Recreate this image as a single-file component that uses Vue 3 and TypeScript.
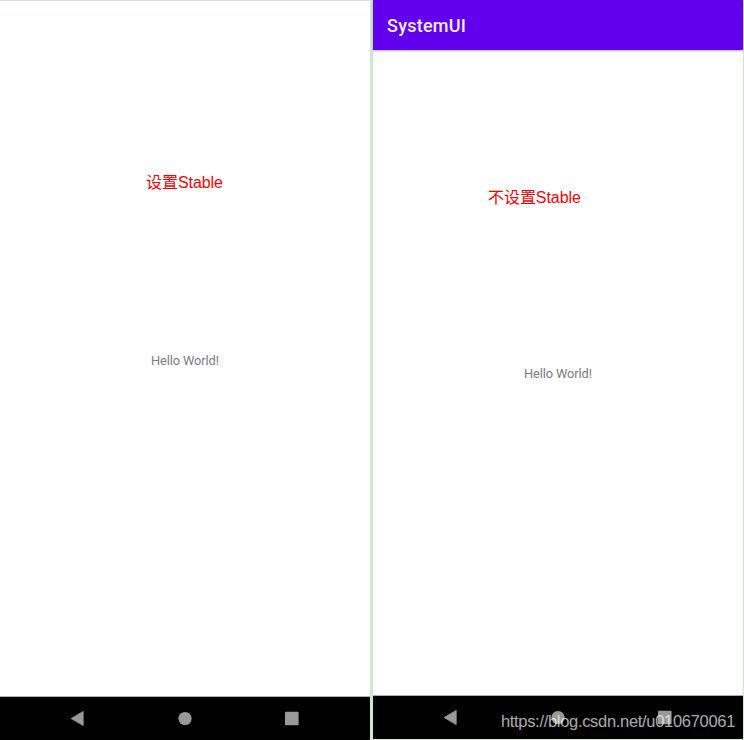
<script setup lang="ts">
interface Phone {
  id: string
  title?: string
  note: string
}

const phones: Phone[] = [
  { id: 'stable', note: '设置Stable' },
  { id: 'unstable', title: 'SystemUI', note: '不设置Stable' },
]
const source = 'https://blog.csdn.net/u010670061'
</script>

<template>
  <main class="comparison">
    <section v-for="phone in phones" :key="phone.id" class="phone" :class="phone.id">
      <header v-if="phone.title" class="app-bar">{{ phone.title }}</header>
      <div class="content">
        <p class="note">{{ phone.note }}</p>
        <p class="hello">Hello World!</p>
      </div>
      <nav class="nav-bar">
        <svg class="keys" width="370" height="43" viewBox="0 0 370 43" fill="#999">
          <path d="M71.2 21.5 83.2 14.4V28.6Z" stroke="#999" stroke-width=".8" stroke-linejoin="round" />
          <circle cx="185" cy="21.5" r="6.6" />
          <rect x="285" y="14.8" width="13.6" height="13.4" rx="1" />
        </svg>
      </nav>
    </section>
    <span class="source">{{ source }}</span>
  </main>
</template>

<style>
body {
  margin: 0;
}
</style>

<style scoped>
.comparison {
  position: relative;
  box-sizing: border-box;
  display: grid;
  grid-template-columns: 370px 370px;
  column-gap: 3px;
  width: 744px;
  height: 740px;
  overflow: hidden;
  background: #cce8cf;
}
.phone {
  box-sizing: border-box;
  display: flex;
  flex-direction: column;
  height: 740px;
  background: #fff;
}
.stable {
  border-top: 1px solid #d3dce8;
}
.unstable {
  height: 739px;
}
.app-bar {
  box-sizing: border-box;
  height: 50px;
  padding: 1px 14px 0;
  background: #6200ee;
  color: #f4edff;
  box-shadow: 0 1px 2px rgba(0, 0, 0, 0.3);
  font: 500 18px/50px Roboto, sans-serif;
  letter-spacing: 0.25px;
}
.content {
  flex: 1;
  display: flex;
  flex-direction: column;
}
.note,
.hello {
  margin: 0;
  white-space: nowrap;
}
.note {
  height: 24px;
  margin: 170px 0 0 146px;
  color: #f00;
  font: 16px/24px "Liberation Sans", "Noto Sans CJK SC", sans-serif;
  letter-spacing: -0.05px;
}
.hello {
  height: 20px;
  margin: 156px 0 0 151px;
  color: #7c7c7c;
  font: 12.8px/20px Roboto, sans-serif;
  letter-spacing: -0.1px;
}
.unstable .note {
  margin: 136px 0 0 115px;
}
.unstable .hello {
  margin-top: 154px;
}
.nav-bar {
  height: 43px;
  border-top: 1px solid #aaafb0;
  background: #000;
}
.keys {
  display: block;
}
.source {
  position: absolute;
  right: 9px;
  bottom: 9px;
  color: rgba(255, 255, 255, 0.68);
  font: 16.5px/20px "Liberation Sans", sans-serif;
  letter-spacing: -0.31px;
}
</style>
